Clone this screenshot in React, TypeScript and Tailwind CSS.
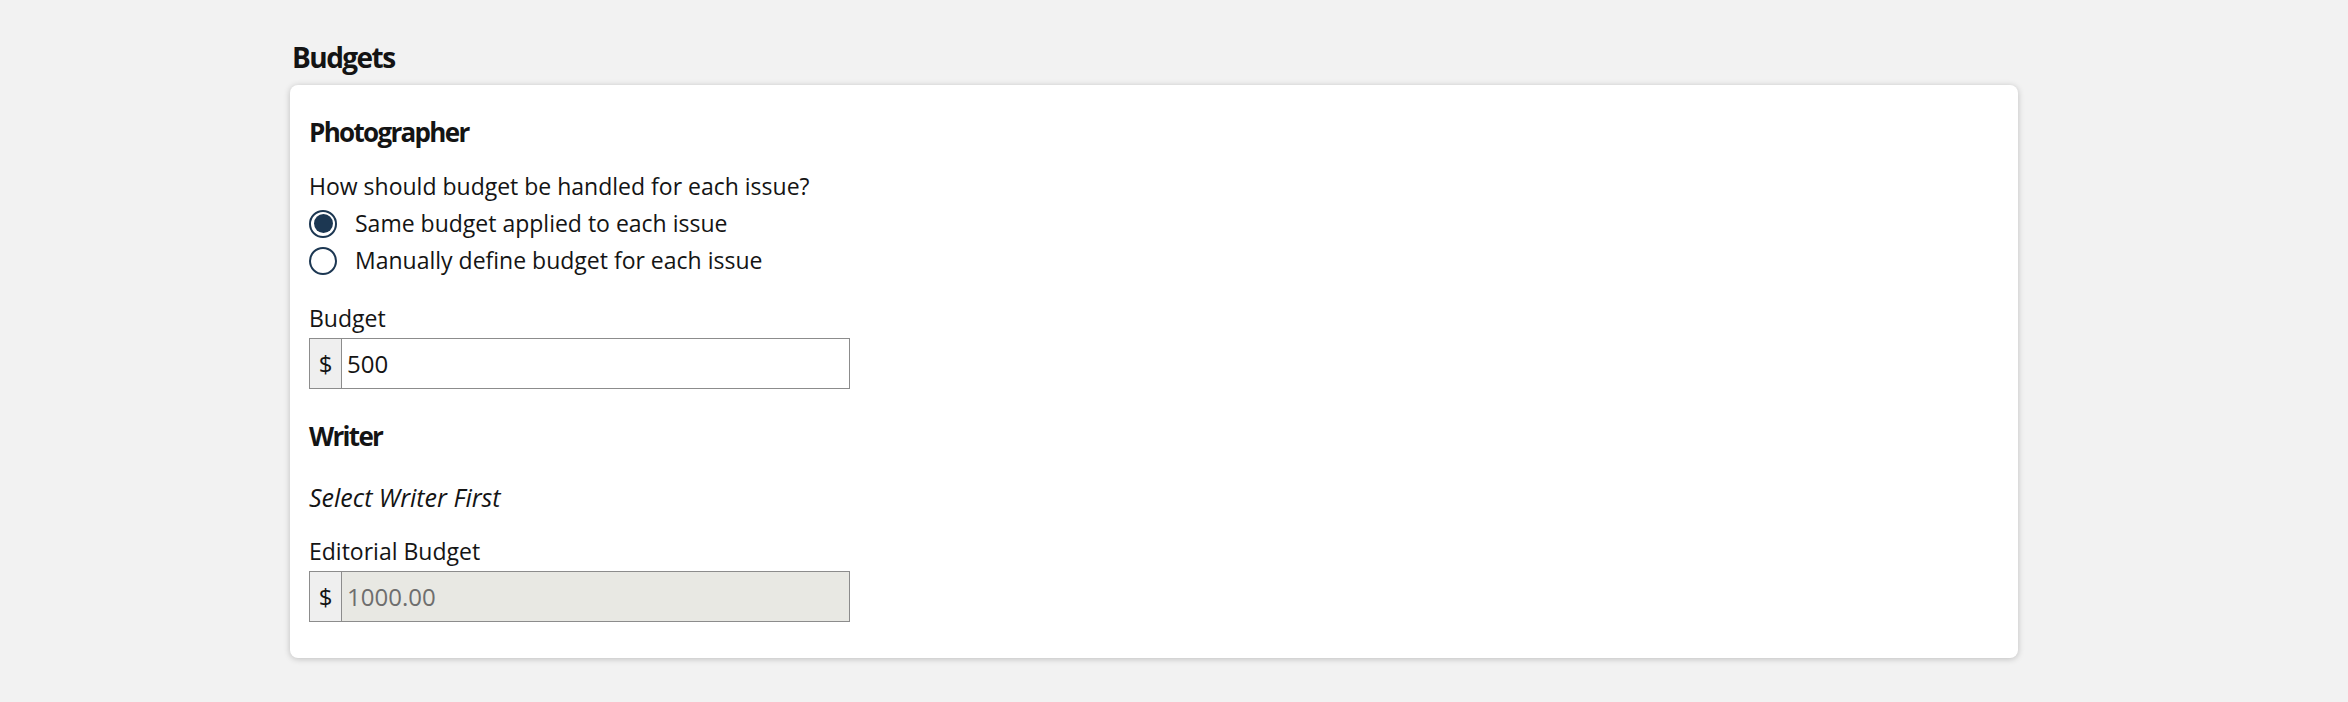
const font = "font-['Open_Sans',_'Liberation_Sans',_sans-serif]";

const Radio = ({ checked, label }: { checked?: boolean; label: string }) => (
  <label className="flex h-[37px] items-center">
    <span className="flex h-[28px] w-[28px] items-center justify-center rounded-full border-2 border-[#1c3752] bg-white">
      {checked && <span className="h-[19px] w-[19px] rounded-full bg-[#1c3752]" />}
    </span>
    <span className="ml-[18px]">{label}</span>
  </label>
);

const MoneyInput = ({ value, disabled }: { value: string; disabled?: boolean }) => (
  <div className="flex h-[51px] w-[541px] border border-[#8c8c8c] text-[24px]">
    <span className="flex w-[32px] items-center justify-center border-r border-[#8c8c8c] bg-[#efefef]">
      $
    </span>
    <span
      className={
        disabled
          ? "flex flex-1 items-center bg-[#e8e8e3] pl-[5px] text-[#6e6e6e]"
          : "flex flex-1 items-center bg-white pl-[5px]"
      }
    >
      {value}
    </span>
  </div>
);

export default function App() {
  return (
    <div className={`${font} min-h-[702px] bg-[#f2f2f2] text-[23px] leading-[37px] text-[#141414]`}>
      <div className="ml-[290px] w-[1728px] pt-[41px]">
        <h2 className="pl-[2px] text-[28px] leading-[32px] font-bold tracking-[-0.055em]">Budgets</h2>
        <div className="mt-[12px] rounded-[8px] bg-white px-[19px] pt-[31px] pb-[36px] shadow-[0_1px_6px_rgba(0,0,0,0.22)]">
          <h3 className="text-[26px] leading-[32px] font-bold tracking-[-0.065em]">Photographer</h3>
          <p className="mt-[20px]">How should budget be handled for each issue?</p>
          <Radio checked label="Same budget applied to each issue" />
          <Radio label="Manually define budget for each issue" />
          <p className="mt-[21px]">Budget</p>
          <div className="mt-[1px]">
            <MoneyInput value="500" />
          </div>
          <h3 className="mt-[31px] text-[26px] leading-[32px] font-bold tracking-[-0.065em]">Writer</h3>
          <p className="mt-[27px] text-[25px] italic">Select Writer First</p>
          <p className="mt-[17px]">Editorial Budget</p>
          <div className="mt-[1px]">
            <MoneyInput value="1000.00" disabled />
          </div>
        </div>
      </div>
    </div>
  );
}
